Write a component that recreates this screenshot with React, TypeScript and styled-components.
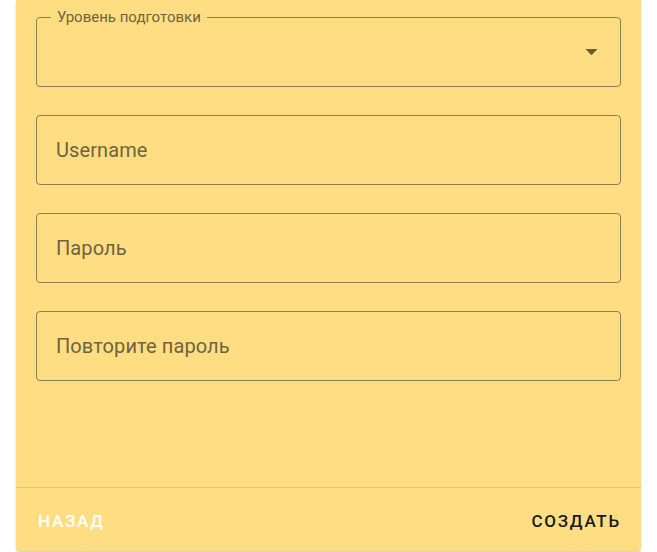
import React from "react";
import styled, { createGlobalStyle } from "styled-components";

const Global = createGlobalStyle`
  html, body { margin: 0; padding: 0; background: #ffffff; }
  body { font-family: Roboto, "Liberation Sans", Arial, sans-serif; overflow: hidden; }
`;

const Page = styled.div`
  height: 552px;
  padding: 0 16px;
  box-sizing: border-box;
`;

const Dialog = styled.div`
  height: 551px;
  background: #ffde83;
  border-radius: 0 0 4px 4px;
  box-shadow: 0 2px 3px rgba(0, 0, 0, 0.12), 0 1px 1px rgba(0, 0, 0, 0.08);
  display: flex;
  flex-direction: column;
`;

const Content = styled.div`
  flex: 1;
  padding: 17px 20px 0;
  display: flex;
  flex-direction: column;
  gap: 28px;
`;

const Field = styled.div`
  position: relative;
  height: 70px;
  box-sizing: border-box;
  border: 1px solid #8f8053;
  border-radius: 4px;
  display: flex;
  align-items: center;
  padding: 0 19px;
`;

const FloatLabel = styled.span`
  position: absolute;
  left: 14px;
  top: -10px;
  padding: 0 6px;
  background: #ffde83;
  font-size: 15px;
  line-height: 18px;
  color: #6f633f;
`;

const Placeholder = styled.span`
  font-size: 20px;
  color: #6f633f;
  letter-spacing: 0.1px;
`;

const Arrow = styled.svg`
  position: absolute;
  right: 14px;
  top: 50%;
  margin-top: -15px;
  width: 29px;
  height: 29px;
  fill: #6a5d34;
`;

const Footer = styled.div`
  height: 64px;
  box-sizing: border-box;
  border-top: 1px solid #e6c66c;
  display: flex;
  align-items: center;
  justify-content: space-between;
  padding: 3px 20px 0 22px;
`;

const Btn = styled.span<{ $light?: boolean }>`
  font-size: 17px;
  font-weight: 500;
  letter-spacing: 1.75px;
  text-transform: uppercase;
  color: ${(p) => (p.$light ? "#ffffff" : "#1b1a16")};
`;

export default function App() {
  return (
    <>
      <Global />
      <Page>
        <Dialog>
          <Content>
            <Field>
              <FloatLabel>Уровень подготовки</FloatLabel>
              <Arrow viewBox="0 0 24 24">
                <path d="M7 10l5 5 5-5z" />
              </Arrow>
            </Field>
            <Field>
              <Placeholder>Username</Placeholder>
            </Field>
            <Field>
              <Placeholder>Пароль</Placeholder>
            </Field>
            <Field>
              <Placeholder>Повторите пароль</Placeholder>
            </Field>
          </Content>
          <Footer>
            <Btn $light>Назад</Btn>
            <Btn>Создать</Btn>
          </Footer>
        </Dialog>
      </Page>
    </>
  );
}
